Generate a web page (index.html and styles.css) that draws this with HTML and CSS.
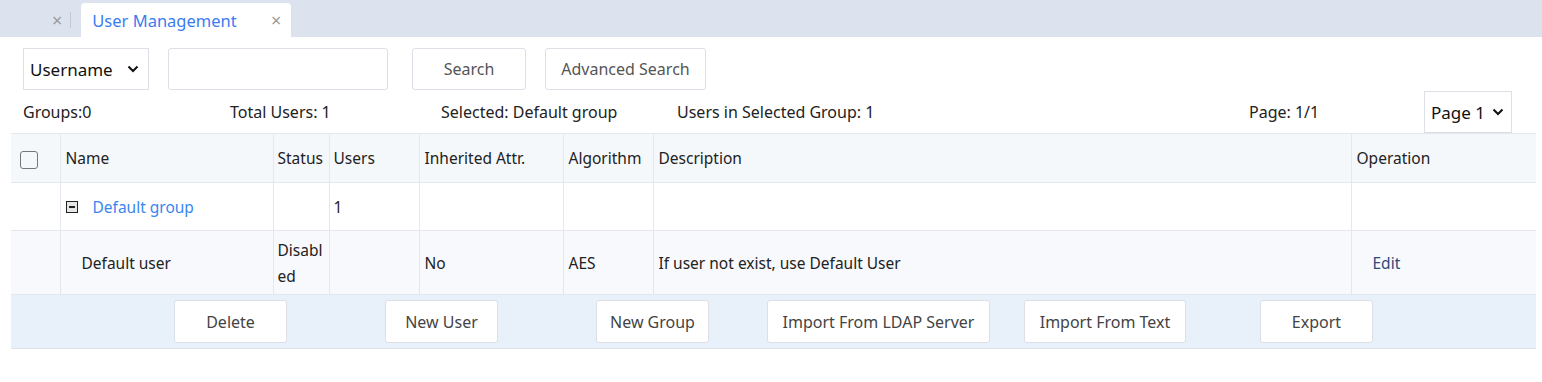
FILE: index.html
```html
<!DOCTYPE html>
<html>
<head>
    <title>User Management</title>
    <meta charset="UTF-8">
    <link rel="stylesheet" href="styles.css">
</head>
<body>
    <div class="tabbar">
        <span class="tab-prev">×</span>
        <span class="tab-sep"></span>
        <div class="tab">
            <span class="tab-title">User Management</span>
            <span class="tab-close">×</span>
        </div>
    </div>

    <div class="page">
        <div class="search-row">
            <div class="select field-type">
                <span>Username</span>
                <svg width="14" height="14" viewBox="0 0 14 14"><path d="M2.5 4.5 L7 9 L11.5 4.5" fill="none" stroke="#111" stroke-width="2"/></svg>
            </div>
            <input class="search-input" type="text">
            <button class="btn btn-search">Search</button>
            <button class="btn btn-adv">Advanced Search</button>
        </div>

        <div class="info-row">
            <span class="info groups">Groups:0</span>
            <span class="info total">Total Users: 1</span>
            <span class="info selected">Selected: Default group</span>
            <span class="info in-group">Users in Selected Group: 1</span>
            <span class="info pages">Page: 1/1</span>
            <div class="select page-select">
                <span>Page 1</span>
                <svg width="14" height="14" viewBox="0 0 14 14"><path d="M2.5 4.5 L7 9 L11.5 4.5" fill="none" stroke="#111" stroke-width="2"/></svg>
            </div>
        </div>

        <table class="users">
            <colgroup>
                <col style="width: 49px">
                <col style="width: 213px">
                <col style="width: 56px">
                <col style="width: 90px">
                <col style="width: 144px">
                <col style="width: 90px">
                <col style="width: 698px">
                <col>
            </colgroup>
            <thead>
                <tr>
                    <th><span class="checkbox"></span></th>
                    <th>Name</th>
                    <th class="tight">Status</th>
                    <th class="tight">Users</th>
                    <th>Inherited Attr.</th>
                    <th>Algorithm</th>
                    <th>Description</th>
                    <th>Operation</th>
                </tr>
            </thead>
            <tbody>
                <tr class="group-row">
                    <td></td>
                    <td>
                        <span class="group-name">
                            <svg width="12" height="12" viewBox="0 0 12 12"><rect x="0.5" y="0.5" width="11" height="11" fill="#e6e6e6" stroke="#222"/><rect x="3" y="5" width="6" height="2" fill="#222"/></svg>
                            <a href="#">Default group</a>
                        </span>
                    </td>
                    <td></td>
                    <td class="tight">1</td>
                    <td></td>
                    <td></td>
                    <td></td>
                    <td></td>
                </tr>
                <tr class="user-row">
                    <td></td>
                    <td class="user-name">Default user</td>
                    <td class="tight status">Disabled</td>
                    <td></td>
                    <td>No</td>
                    <td>AES</td>
                    <td>If user not exist, use Default User</td>
                    <td class="op"><a href="#">Edit</a></td>
                </tr>
            </tbody>
        </table>

        <div class="actions">
            <button class="btn act act-delete">Delete</button>
            <button class="btn act act-user">New User</button>
            <button class="btn act act-group">New Group</button>
            <button class="btn act act-ldap">Import From LDAP Server</button>
            <button class="btn act act-text">Import From Text</button>
            <button class="btn act act-export">Export</button>
        </div>
    </div>
</body>
</html>
```

FILE: styles.css
```css
body {
    margin: 0;
    font-family: "Noto Sans", "Liberation Sans", sans-serif;
    font-size: 15px;
    color: #222;
    background: #fff;
}

.tabbar {
    height: 37px;
    background: #dde3ee;
    display: flex;
    align-items: flex-end;
}

.tab-prev {
    color: #999;
    font-size: 18px;
    margin-left: 52px;
    line-height: 34px;
}

.tab-sep {
    width: 1px;
    height: 16px;
    background: #c4c9d2;
    margin: 0 6px 9px 8px;
}

.tab {
    width: 210px;
    height: 34px;
    background: #fff;
    border-radius: 4px 4px 0 0;
    display: flex;
    align-items: center;
    justify-content: space-between;
    box-sizing: border-box;
    padding: 0 10px 0 11px;
    margin-left: 4px;
}

.tab-title {
    color: #3a7cf2;
    font-size: 16.5px;
}

.tab-close {
    color: #999;
    font-size: 18px;
}

.page {
    padding: 11px 6px 0 11px;
}

.search-row {
    display: flex;
    align-items: center;
    height: 42px;
    padding-left: 12px;
}

.select {
    display: flex;
    align-items: center;
    justify-content: space-between;
    box-sizing: border-box;
    border: 1px solid #dcdfe6;
    height: 42px;
    font-size: 17px;
    color: #111;
}

.field-type {
    width: 126px;
    padding: 0 8px 0 6px;
}

.search-input {
    width: 220px;
    height: 42px;
    box-sizing: border-box;
    border: 1px solid #dcdfe6;
    border-radius: 3px;
    margin-left: 19px;
}

.btn {
    background: #fff;
    border: 1px solid #dcdfe6;
    border-radius: 3px;
    font-family: inherit;
    font-size: 16px;
    color: #555;
    height: 42px;
    box-sizing: border-box;
    padding: 0;
    cursor: pointer;
}

.btn-search {
    width: 114px;
    margin-left: 24px;
}

.btn-adv {
    width: 161px;
    margin-left: 19px;
}

.info-row {
    display: flex;
    align-items: center;
    height: 43px;
    padding-left: 12px;
    font-size: 16px;
    color: #222;
}

.info {
    white-space: nowrap;
}

.groups { width: 207px; }
.total { width: 211px; }
.selected { width: 236px; }
.in-group { width: 572px; }
.pages { width: 175px; }

.page-select {
    width: 88px;
    padding: 0 6px;
    margin-top: 1px;
}

.users {
    width: 1525px;
    border-collapse: collapse;
    table-layout: fixed;
    font-size: 15.5px;
}

.users th,
.users td {
    border: 1px solid #e4e8ee;
    text-align: left;
    font-weight: normal;
    padding: 0 5px;
    color: #222;
}

.users tr > :first-child {
    border-left: none;
}

.users tr > :last-child {
    border-right: none;
}

.users th.tight,
.users td.tight {
    padding: 0 4px;
}

.users thead tr {
    height: 49px;
    background: #f5f8fb;
}

.checkbox {
    display: inline-block;
    width: 16px;
    height: 16px;
    border: 1px solid #777;
    border-radius: 3px;
    margin-left: 4px;
    vertical-align: middle;
}

.group-row {
    height: 48px;
}

.group-name {
    display: inline-flex;
    align-items: center;
    gap: 15px;
}

.group-name a {
    color: #3a86f0;
    text-decoration: none;
}

.user-row {
    height: 64px;
    background: #f7f9fc;
}

.user-name {
    padding-left: 21px !important;
}

.status {
    line-height: 26px;
    word-break: break-all;
}

.op a {
    color: #2d4a7c;
    text-decoration: none;
    padding-left: 16px;
}

.actions {
    width: 1525px;
    height: 53px;
    background: #e8f0fa;
    border-bottom: 1px solid #dfe4ea;
    display: flex;
    align-items: center;
}

.act {
    height: 43px;
    color: #444;
}

.act-delete { width: 113px; margin-left: 163px; }
.act-user { width: 113px; margin-left: 98px; }
.act-group { width: 113px; margin-left: 98px; }
.act-ldap { width: 223px; margin-left: 58px; }
.act-text { width: 162px; margin-left: 34px; }
.act-export { width: 113px; margin-left: 74px; }
```
